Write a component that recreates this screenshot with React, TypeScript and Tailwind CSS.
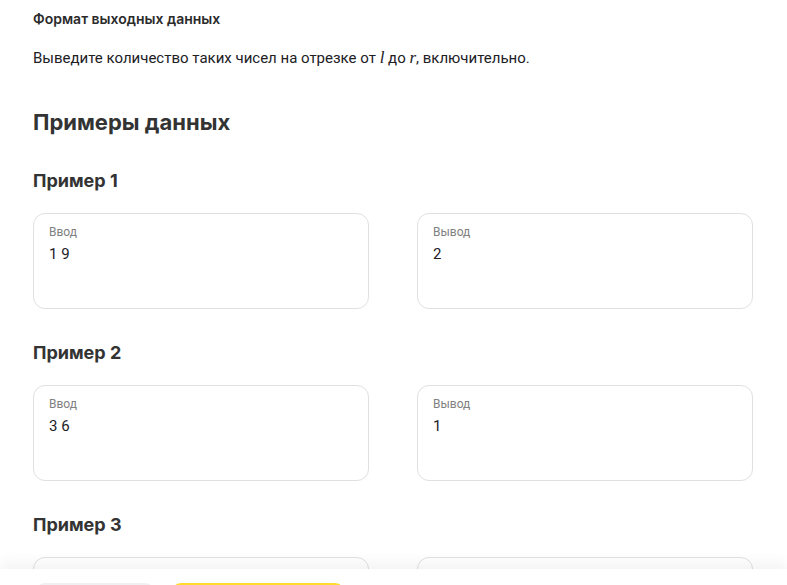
import React from 'react';

const examples = [
  { title: 'Пример 1', input: '1 9', output: '2' },
  { title: 'Пример 2', input: '3 6', output: '1' },
  { title: 'Пример 3', input: '', output: '' },
];

const Box: React.FC<{ label: string; value: string }> = ({ label, value }) => (
  <div className="h-[96px] rounded-[12px] border border-[#e0e0e0] px-[15px] pt-[10px]">
    <div className="text-[12px] leading-[16px] text-[#808080]">{label}</div>
    <div className="mt-[4px] text-[15px] leading-[20px] text-[#21201f]">{value}</div>
  </div>
);

export default function App() {
  return (
    <div className="min-h-screen bg-white font-['Roboto',sans-serif] text-[#21201f]">
      <div className="w-[720px] ml-[33px] pt-[10px] pb-[120px]">
        <h3 className="font-['Inter',sans-serif] text-[14px] leading-[18px] font-semibold text-[#2b2b2b]">
          Формат выходных данных
        </h3>
        <p className="mt-[20px] text-[15px] leading-[20px]">
          Выведите количество таких чисел на отрезке от{' '}
          <span className="font-['Liberation_Serif',serif] italic text-[17px]">l</span> до{' '}
          <span className="font-['Liberation_Serif',serif] italic text-[17px]">r</span>, включительно.
        </p>

        <h2 className="mt-[40px] font-['Inter',sans-serif] text-[22px] leading-[28px] font-bold text-[#333]">
          Примеры данных
        </h2>

        {examples.map((ex, i) => (
          <div key={i} className={i === 0 ? 'mt-[33px]' : 'mt-[32px]'}>
            <h4 className="font-['Inter',sans-serif] text-[18px] leading-[24px] font-bold text-[#333]">{ex.title}</h4>
            <div className="mt-[20px] grid grid-cols-2 gap-[48px]">
              <Box label={ex.input ? 'Ввод' : ''} value={ex.input} />
              <Box label={ex.output ? 'Вывод' : ''} value={ex.output} />
            </div>
          </div>
        ))}
      </div>

      {/* sticky action bar */}
      <div className="fixed left-0 right-0 top-[569px] h-[80px] bg-white shadow-[0_-6px_14px_rgba(0,0,0,0.05)]">
        <div className="flex gap-[16px] pl-[35px] pt-[14px]">
          <div className="h-[44px] w-[120px] rounded-[10px] bg-[#f0f0f3]" />
          <div className="h-[44px] w-[174px] rounded-[10px] bg-[#ffdb2d]" />
        </div>
      </div>
    </div>
  );
}
